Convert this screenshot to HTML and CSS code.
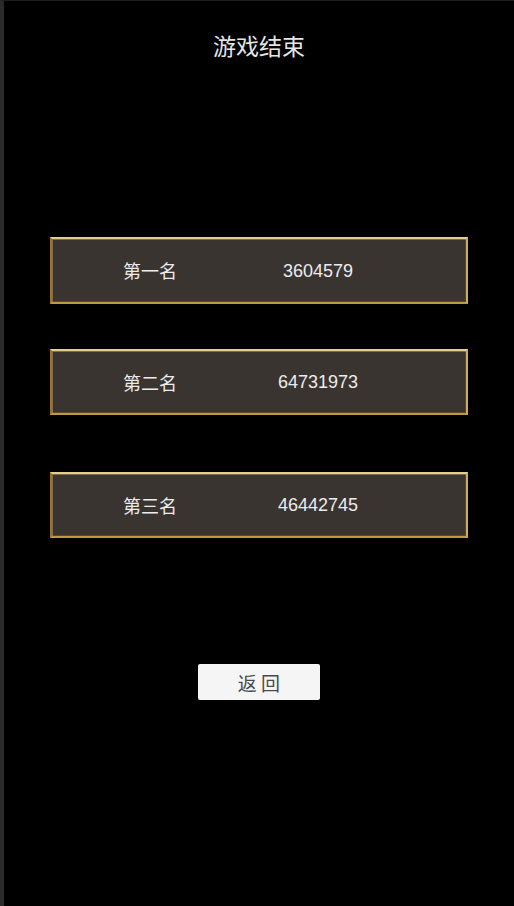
FILE: index.html
```html
<!DOCTYPE html>
<html lang="zh">
<head>
<meta charset="utf-8">
<link rel="stylesheet" href="styles.css">
<title>游戏结束</title>
</head>
<body>
<div class="screen">
  <h1 class="title">游戏结束</h1>
  <div class="ranks">
    <div class="rank r1"><span class="label">第一名</span><span class="score">3604579</span></div>
    <div class="rank r2"><span class="label">第二名</span><span class="score">64731973</span></div>
    <div class="rank r3"><span class="label">第三名</span><span class="score">46442745</span></div>
  </div>
  <div class="actions"><button class="back">返 回</button></div>
</div>
</body>
</html>
```
FILE: styles.css
```css
html, body {
  margin: 0;
  padding: 0;
  background: #000;
  height: 100%;
}
body {
  font-family: "Noto Sans CJK SC", "Liberation Sans", sans-serif;
  color: #e8e8e8;
}
.screen {
  box-sizing: border-box;
  height: 906px;
  border-left: 4px solid #2a2a2a;
  border-top: 1px solid #1e1e1e;
  display: flex;
  flex-direction: column;
  align-items: center;
}
.title {
  margin: 27px 0 0;
  font-size: 23px;
  font-weight: normal;
  line-height: 34px;
  color: #e6e6e6;
}
.ranks {
  margin-top: 175px;
  display: flex;
  flex-direction: column;
}
.rank {
  box-sizing: border-box;
  width: 418px;
  height: 67px;
  background: #3a3431;
  border: 2px solid;
  border-color: #e3cd90 #d0aa50 #bf9b3e #a0702a;
  box-shadow: inset 1px 1px 0 rgba(240, 215, 150, 0.35), inset -1px -1px 0 rgba(120, 85, 30, 0.6);
  display: flex;
  align-items: center;
  font-size: 18px;
}
.r2 { margin-top: 45px; height: 66px; }
.r3 { margin-top: 57px; height: 66px; }
.label {
  width: 196px;
  text-align: center;
  color: #ececec;
  line-height: 20px;
  padding-bottom: 1px;
}
.score {
  width: 140px;
  text-align: center;
  font-family: "Liberation Sans", sans-serif;
  font-size: 18px;
  color: #ececec;
  padding-top: 1px;
}
.actions {
  margin-top: 126px;
}
.back {
  width: 122px;
  height: 36px;
  border: none;
  border-radius: 2px;
  background: #f5f5f5;
  color: #4a4a4a;
  font-family: "Noto Sans CJK SC", sans-serif;
  font-size: 19px;
  letter-spacing: 0;
  padding: 0;
  cursor: pointer;
}
```
